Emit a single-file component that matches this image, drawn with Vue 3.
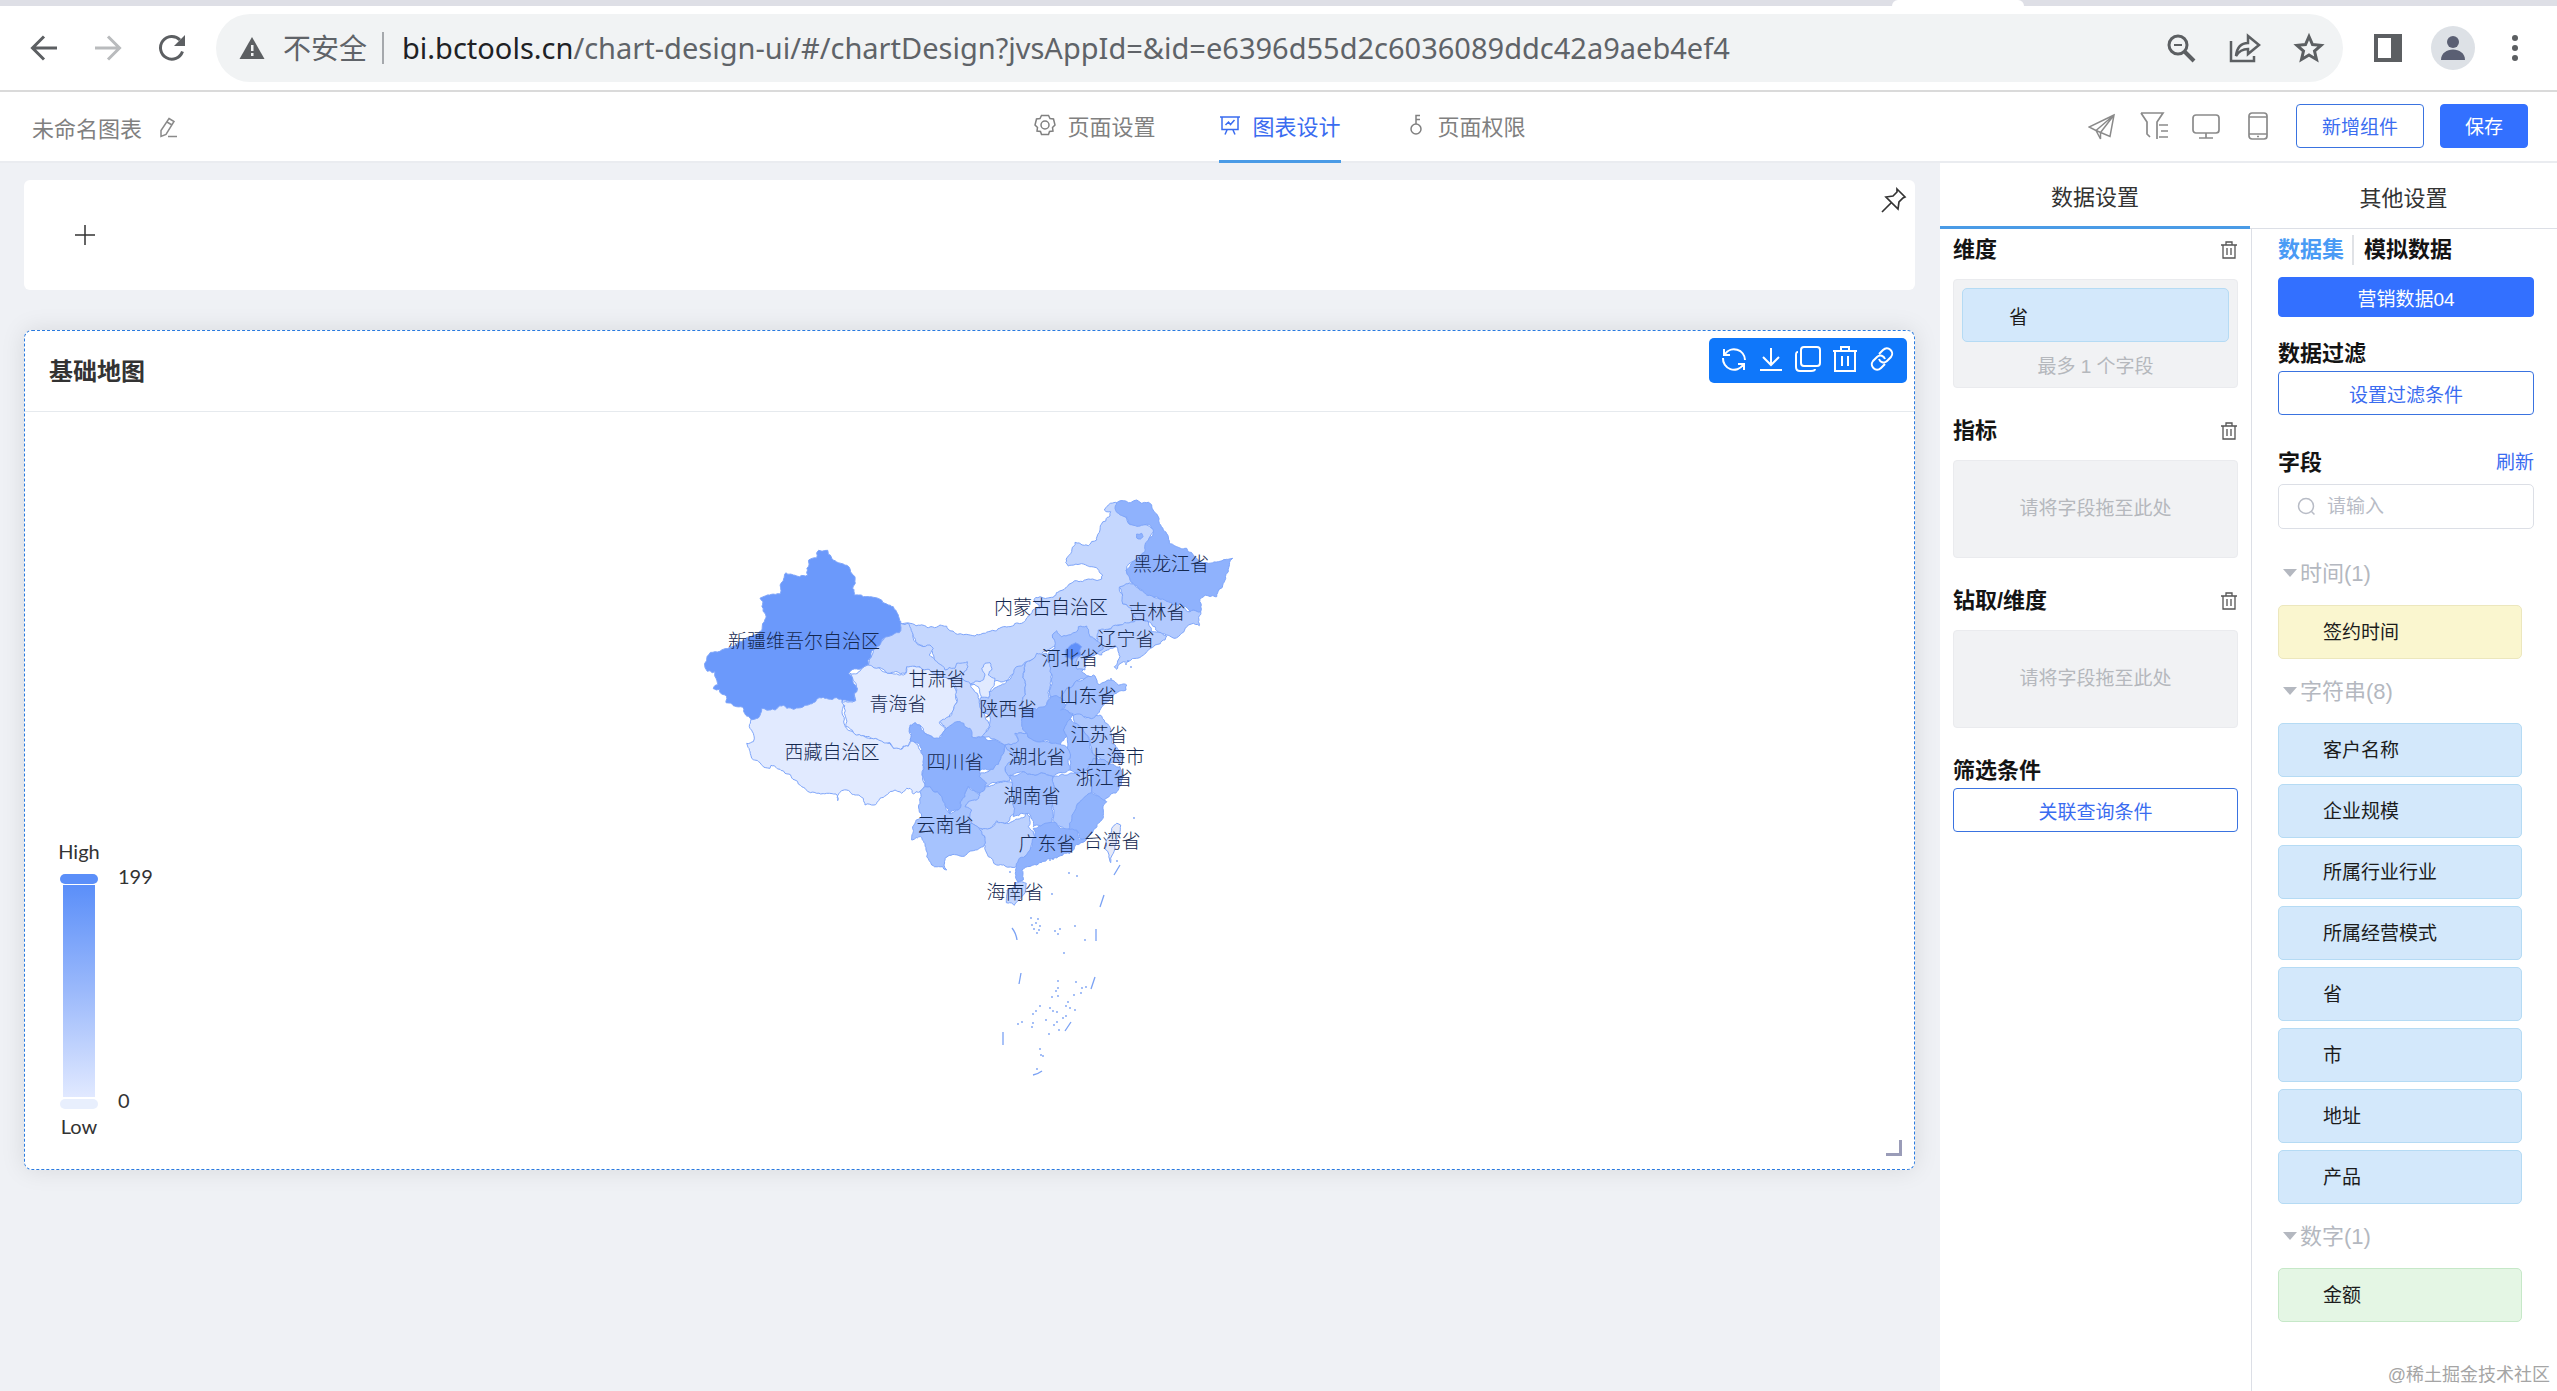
<script setup>
import { ref } from 'vue'

const keyword = ref('')

const groups = [
  { name: '时间', kind: 'time', fields: ['签约时间'] },
  { name: '字符串', kind: 'text', fields: ['客户名称', '企业规模', '所属行业行业', '所属经营模式', '省', '市', '地址', '产品'] },
  { name: '数字', kind: 'number', fields: ['金额'] },
]

// Province outlines: [name, fill, origin x, origin y, points at three units per pixel]
const provinces = [
  ['内蒙古', '#c5d7fe', 960, 480, '-178,430 -150,430 -120,436 -60,435 -30,452 10,464 45,468 90,454 150,440 185,430 205,408 240,385 222,358 240,350 280,352 315,325 350,302 385,297 425,297 428,285 405,262 370,252 325,258 317,248 335,215 345,187 385,197 410,180 420,150 450,108 452,95 433,90 445,75 470,68 490,100 505,130 560,135 585,145 570,175 560,215 500,260 515,300 520,315 478,322 490,350 490,372 520,385 530,415 480,435 440,450 415,475 400,480 380,475 300,470 285,500 250,515 205,545 150,590 130,605 100,605 90,620 60,615 35,615 5,605 -20,580 -60,570 -80,540 -90,500 -120,495 -140,470'],
  ['西藏', '#e1eaff', 690, 480, '160,684 250,670 370,640 455,650 458,685 463,720 470,745 500,762 545,775 585,785 600,790 610,805 635,808 640,798 655,798 660,785 672,784 684,795 694,820 700,860 698,900 706,915 700,925 690,935 678,935 670,942 660,925 650,925 635,940 615,930 590,945 570,955 560,970 545,975 525,975 520,955 500,945 480,935 455,932 447,940 443,962 438,942 410,940 380,940 362,938 345,925 325,912 315,900 285,880 258,862 243,856 240,865 210,848 185,835 177,805 170,790 190,785 190,760 178,740 183,719'],
  ['青海', '#e3ebff', 690, 480, '533,555 560,562 580,575 600,580 640,585 650,572 648,560 675,560 690,562 720,570 760,590 790,600 800,640 802,665 792,690 775,720 758,722 748,728 765,755 752,765 750,775 730,775 705,760 690,735 675,728 662,738 662,780 655,798 640,798 632,808 612,805 600,788 545,775 490,757 468,740 463,700 455,665 497,662 492,640 502,626 480,580'],
  ['甘肃', '#c6d7fe', 890, 610, '32,40 55,40 70,85 85,105 120,105 130,115 118,135 145,160 165,180 195,175 200,160 232,155 230,180 215,205 240,220 262,250 268,270 275,300 285,320 300,345 288,375 275,382 245,380 225,355 205,340 190,345 180,365 165,350 150,335 155,330 180,320 190,300 202,270 198,235 185,210 120,180 90,170 50,170 45,190 0,190 -40,175 -65,165 -50,120 0,75'],
  ['新疆', '#6b99fb', 690, 480, '386,211 413,211 415,223 430,240 445,248 460,252 478,262 485,280 495,290 496,310 488,325 492,345 520,350 550,352 570,358 590,372 610,380 622,400 632,430 628,458 600,468 575,480 548,510 540,535 533,555 505,568 476,580 488,595 490,610 502,626 492,640 497,660 470,662 440,653 410,655 380,658 370,668 345,676 325,684 310,688 290,685 280,676 262,684 255,690 238,690 215,686 212,700 205,714 185,719 170,708 160,684 140,680 108,668 106,645 92,640 88,628 70,626 72,620 84,614 78,595 75,575 52,574 44,550 52,528 75,515 105,506 125,500 150,485 180,470 215,452 217,438 228,412 220,395 219,365 210,355 245,343 270,342 273,310 288,278 310,285 353,285 356,240 380,234'],
  ['宁夏', '#e1eaff', 890, 610, '285,160 300,158 305,180 295,195 315,205 310,230 298,245 295,265 275,265 265,230 242,222 270,215 285,195 275,175'],
  ['黑龙江', '#8fb2fd', 960, 480, '470,68 490,62 530,60 545,70 575,75 595,110 610,150 628,190 650,200 680,205 700,225 715,240 745,250 775,245 800,238 818,235 805,275 795,300 770,350 735,345 720,358 722,395 690,395 670,378 640,375 610,365 590,350 560,345 535,325 520,310 510,300 498,270 520,245 555,215 565,180 580,150 570,135 540,138 508,132 500,110 475,100 465,85'],
  ['加格达奇', '#8fb2fd', 960, 480, '530,162 545,160 549,170 542,177 530,174'],
  ['吉林', '#b2cafe', 960, 480, '478,322 520,312 540,330 560,345 600,358 640,375 690,395 722,395 718,437 700,430 680,440 665,460 645,475 620,465 600,462 585,440 560,420 530,420 515,385 488,372 488,345'],
  ['辽宁', '#b9cffe', 960, 480, '415,450 440,448 480,435 530,420 565,425 575,455 620,468 615,480 585,495 560,515 530,535 490,545 470,568 463,560 480,530 470,500 450,505 425,525 408,520 400,495 415,480'],
  ['陕西', '#b2cafe', 890, 610, '412,155 400,190 405,240 398,300 395,330 410,370 375,370 385,395 345,405 320,390 275,380 300,350 300,320 275,300 270,265 295,265 298,245 312,235 350,212 375,175'],
  ['山西', '#b8cefe', 890, 610, '410,155 440,130 470,130 480,170 485,190 480,230 478,265 465,295 440,300 398,300 405,240 400,190'],
  ['河北', '#a3c0fe', 890, 610, '487,75 500,62 515,80 535,75 560,65 565,50 590,48 600,80 625,95 640,115 620,130 600,140 585,150 580,178 575,185 600,200 560,212 530,235 518,262 480,258 485,225 480,185 470,145 478,125 495,115'],
  ['天津', '#bdd2fe', 890, 610, '575,135 588,150 585,180 562,178 560,150'],
  ['北京', '#6090fa', 890, 610, '555,98 575,110 572,135 545,150 525,140 528,118'],
  ['山东', '#a3c0fe', 890, 610, '560,212 585,205 610,195 628,225 655,210 685,225 710,225 708,240 670,255 645,280 625,310 600,325 560,318 545,310 515,300 530,280 510,265 530,235'],
  ['江苏', '#adc7fe', 890, 610, '550,315 600,325 630,315 655,345 665,400 700,440 690,460 650,455 620,440 600,400 585,370 555,340'],
  ['安徽', '#9dbcfe', 890, 610, '530,325 560,340 585,370 600,410 620,440 600,480 560,488 540,480 540,440 530,380 520,360'],
  ['河南', '#8db1fd', 890, 610, '480,260 515,265 528,285 512,300 550,315 530,340 520,360 530,380 510,405 480,395 440,395 410,370 395,340 395,305 440,300 465,290'],
  ['湖北', '#a3c0fe', 890, 610, '375,370 410,370 440,395 490,400 515,405 540,430 540,480 490,500 460,490 400,485 350,495 345,470 380,450 370,430 345,405 385,393'],
  ['重庆', '#b3cbfe', 890, 610, '345,405 370,430 375,450 345,475 360,510 330,515 285,530 265,490 300,480 330,450'],
  ['四川', '#8db1fd', 890, 610, '60,345 75,338 100,365 135,385 155,378 165,360 200,335 240,355 245,380 280,380 320,392 345,408 330,450 310,478 270,480 268,500 290,520 280,555 255,545 235,530 225,560 205,600 180,610 150,555 120,530 105,530 100,450 85,400 60,390'],
  ['贵州', '#bcd1fe', 890, 610, '250,570 285,530 340,515 370,520 365,560 375,610 345,640 320,632 300,655 270,655 245,640 225,590 230,570'],
  ['湖南', '#a0befe', 890, 610, '360,495 400,485 460,490 490,500 485,560 490,620 480,650 440,645 430,650 415,610 370,620 370,560 365,510'],
  ['江西', '#adc7fe', 890, 610, '490,500 550,490 590,490 605,545 565,580 545,640 535,660 500,650 488,630 485,560'],
  ['浙江', '#9cbbfe', 890, 610, '590,480 610,445 650,455 690,470 700,500 685,540 640,572 605,545'],
  ['福建', '#91b4fd', 890, 610, '605,548 640,570 650,575 640,600 635,630 610,662 580,695 565,665 535,660 550,610 570,575'],
  ['广西', '#bcd1fe', 890, 610, '270,660 300,655 320,635 350,640 410,610 420,620 415,650 435,680 425,720 375,772 320,765 295,740 280,700 285,680 265,670'],
  ['广东', '#8fb2fd', 890, 610, '430,655 465,640 500,640 510,655 560,660 568,690 590,688 540,730 490,745 440,765 395,780 400,810 382,815 376,790 378,775 420,720 435,680'],
  ['云南', '#a6c3fe', 890, 610, '90,545 105,530 120,530 150,555 180,612 205,600 225,560 235,530 270,555 235,575 225,590 245,600 240,640 270,660 285,685 280,710 250,722 210,738 165,745 170,780 158,770 125,765 110,740 108,720 92,680 65,690 68,650 95,620 90,580'],
  ['海南', '#c3d6fe', 890, 610, '351,840 375,818 409,820 407,840 386,870 373,886 349,878'],
  ['台湾', '#e6e9f6', 890, 610, '680,640 692,645 690,665 672,725 662,758 645,715 650,690 665,655'],
]

// Repeatable pseudo-random value in -1..1, the same for both provinces on a border
const noise = (x, y, seed) => {
  const v = Math.sin(x * 12.9898 + y * 78.233 + seed) * 43758.5453
  return (v - Math.floor(v)) * 2 - 1
}

// Splits a border edge in two until it is short, nudging each midpoint
const roughen = (a, b) => {
  const length = Math.hypot(b[0] - a[0], b[1] - a[1])
  if (length < 9) return [b]
  const sx = a[0] + b[0]
  const sy = a[1] + b[1]
  const amount = Math.min(length * 0.17, 6)
  const mid = [sx / 2 + noise(sx, sy, 1) * amount, sy / 2 + noise(sx, sy, 2) * amount]
  return [...roughen(a, mid), ...roughen(mid, b)]
}

const shapes = provinces.map(([name, fill, ox, oy, text]) => {
  const points = text.split(' ').map((pair) => {
    const [x, y] = pair.split(',').map(Number)
    return [x + ox * 3, y + oy * 3]
  })
  const line = points.flatMap((p, i) => roughen(p, points[(i + 1) % points.length]))
  return { name, fill, points: line.map(([x, y]) => `${(x / 3).toFixed(1)},${(y / 3).toFixed(1)}`).join(' ') }
})

const labels = [
  ['新疆维吾尔自治区', 804, 641], ['甘肃省', 937, 679], ['青海省', 898, 704], ['西藏自治区', 832, 752],
  ['四川省', 955, 762], ['黑龙江省', 1171, 564], ['内蒙古自治区', 1051, 607], ['吉林省', 1157, 612],
  ['辽宁省', 1126, 639], ['河北省', 1070, 658], ['山东省', 1088, 696], ['陕西省', 1008, 709],
  ['江苏省', 1099, 735], ['湖北省', 1037, 757], ['上海市', 1116, 757], ['浙江省', 1104, 778],
  ['湖南省', 1032, 796], ['云南省', 945, 825], ['广东省', 1047, 844], ['台湾省', 1112, 841], ['海南省', 1015, 892],
]

const seaLines = 'M1120 865l-6 10M1104 895l-4 12M1096 929v12M1095 977l-4 12M1071 1022l-6 9M1042 1071q-4 3-9 4M1003 1032v13M1021 973l-2 11M1012 928q4 5 5 12'

const islets = [
  [1031, 918], [1038, 919], [1032, 925], [1036, 923], [1040, 926], [1034, 929], [1039, 930], [1037, 933], [1055, 931], [1060, 929],
  [1058, 934], [1052, 894], [1075, 926], [1085, 940], [1064, 953], [1069, 873], [1077, 876], [1058, 981], [1058, 988], [1056, 991],
  [1076, 982], [1082, 988], [1086, 987], [1081, 993], [1074, 995], [1052, 997], [1058, 996], [1068, 1002], [1066, 1006], [1070, 1008],
  [1075, 1010], [1050, 1008], [1053, 1011], [1057, 1012], [1040, 1006], [1036, 1011], [1033, 1014], [1046, 1020], [1054, 1025], [1057, 1022],
  [1033, 1023], [1032, 1027], [1022, 1022], [1018, 1024], [1063, 1018], [1066, 1016], [1059, 1030], [1049, 1034], [1040, 1049], [1041, 1055],
  [1043, 1056], [1037, 1069], [1126, 664], [1128, 661], [1131, 667], [1111, 679], [1010, 872], [1050, 860], [1053, 859], [1134, 818], [1117, 861],
]
</script>

<template>
  <div class="window">
    <div class="tabstrip"><span class="tabfoot"></span></div>

    <div class="browser">
      <button class="plain" aria-label="后退"><svg width="28" height="28" viewBox="0 0 28 28" fill="none" stroke="#5c5f62" stroke-width="3"><path d="M27 14H3M14 2.500 2.500 14 14 25.500" /></svg></button>
      <button class="plain" aria-label="前进"><svg width="28" height="28" viewBox="0 0 28 28" fill="none" stroke="#b9bbbd" stroke-width="3"><path d="M1 14h24M14 2.500 25.500 14 14 25.500" /></svg></button>
      <button class="plain" aria-label="刷新"><svg width="28" height="28" viewBox="0 0 28 28"><path d="M24.500 17.500A11.300 11.300 0 1 1 22 6" fill="none" stroke="#5c5f62" stroke-width="3" /><path d="M27 1v11H16z" fill="#5c5f62" /></svg></button>
      <div class="address">
        <svg width="26" height="24" viewBox="0 0 26 24"><path d="M13 1 25.500 23H.5z" fill="#5c5f62" /><path d="M12 9h2.500v6H12zM12 17h2.500v3H12z" fill="#f1f3f4" /></svg>
        <span class="unsafe">不安全</span>
        <span class="url"><b>bi.bctools.cn</b>/chart-design-ui/#/chartDesign?jvsAppId=&amp;id=e6396d55d2c6036089ddc42a9aeb4ef4</span>
        <span class="address-tools">
          <button class="plain" aria-label="缩放"><svg width="32" height="32" viewBox="0 0 32 32" fill="none" stroke="#5c5f62" stroke-width="3"><circle cx="13" cy="13" r="9" /><path d="M20 20l9 9" stroke-width="4" /><path d="M9 13h8" stroke-width="2" /></svg></button>
          <button class="plain" aria-label="分享"><svg width="32" height="32" viewBox="0 0 32 32" fill="none" stroke="#5c5f62" stroke-width="2.500"><path d="M2 9v20h23v-5" /><path d="M7 24c1-9 5-13 12-13V4l11 9-11 9v-5c-6 0-9 2-12 7z" /></svg></button>
          <button class="plain" aria-label="收藏"><svg width="32" height="32" viewBox="0 0 32 32" fill="none" stroke="#5c5f62" stroke-width="3"><path d="M16 4.500l3.500 8 8.500.8-6.500 5.700 2 8.500L16 23l-7.500 4.500 2-8.500L4 13.300l8.500-.8z" /></svg></button>
        </span>
      </div>
      <button class="plain" aria-label="侧边栏"><svg width="30" height="28" viewBox="0 0 30 28"><path d="M1 0h28v28H1zM5 4v20h13V4z" fill="#5c5f62" fill-rule="evenodd" /></svg></button>
      <button class="plain" aria-label="用户"><svg width="44" height="44" viewBox="0 0 44 44"><circle cx="22" cy="22" r="22" fill="#dde1e6" /><circle cx="22" cy="16" r="6" fill="#5a5f73" /><path d="M10 34c0-14 24-14 24 0z" fill="#5a5f73" /></svg></button>
      <button class="plain more" aria-label="更多"><svg width="8" height="28" viewBox="0 0 8 28" fill="#5c5f62"><circle cx="4" cy="4" r="3" /><circle cx="4" cy="14" r="3" /><circle cx="4" cy="24" r="3" /></svg></button>
    </div>

    <header class="header">
      <div class="doc">
        <span>未命名图表</span>
        <svg width="20" height="22" viewBox="0 0 20 22" fill="none" stroke="#8a8a8a" stroke-width="1.500"><path d="M11 2.500l5 3-8 13-5 2V14.500zM9 6l5 3M10 20.500h9" /></svg>
      </div>
      <nav class="nav">
        <button>
          <svg width="22" height="22" viewBox="0 0 22 22" fill="none" stroke="currentColor" stroke-width="1.500"><path d="M7.500 1.500h7l1.500 3 3.500.5L21 11l-2.500 2.500.5 3.500-3.500.5-1 3h-7l-1-3-3.500-.5.5-3.500L1 11l1.500-6 3.500-.5z" /><circle cx="11" cy="11" r="4" /></svg>
          页面设置
        </button>
        <button class="on">
          <svg width="22" height="22" viewBox="0 0 22 22" fill="none" stroke="currentColor" stroke-width="1.500"><path d="M1 3h20M3 3v12.500h16V3M8 16l-2 4.500M14 16l2 4.500M6.500 11l3-3 2 2.500 4-4.500" /></svg>
          图表设计
        </button>
        <button>
          <svg width="22" height="22" viewBox="0 0 22 22" fill="none" stroke="currentColor" stroke-width="1.500"><circle cx="11" cy="15" r="5" /><path d="M11 10V1.500h4M11 5.500h4" /></svg>
          页面权限
        </button>
      </nav>
      <div class="actions">
        <button class="plain" aria-label="发布"><svg width="28" height="28" viewBox="0 0 28 28" fill="none" stroke="#8a8a8a" stroke-width="1.500"><path d="M26 3 1 15l7 3.500 14 6zM26 3 8 18.500M26 3 12.500 20.500V27L8 18.500" /></svg></button>
        <button class="plain" aria-label="筛选"><svg width="28" height="28" viewBox="0 0 28 28" fill="none" stroke="#8a8a8a" stroke-width="1.700"><path d="M1 1h22l-6 9v17M1 1l6 9v12l3 3M19 13h9M21 19h7M19 25h9" /></svg></button>
        <button class="plain" aria-label="电脑"><svg width="28" height="28" viewBox="0 0 28 28" fill="none" stroke="#8a8a8a" stroke-width="1.700"><rect x="1" y="3" width="26" height="18" rx="3" /><path d="M14 21v5M7 26h14" /></svg></button>
        <button class="plain" aria-label="手机"><svg width="28" height="28" viewBox="0 0 28 28" fill="none" stroke="#8a8a8a" stroke-width="1.700"><rect x="5" y="1" width="18" height="26" rx="3" /><path d="M5 5h18M5 22h18M13 24.500h2" /></svg></button>
        <button class="btn add">新增组件</button>
        <button class="btn fill save">保存</button>
      </div>
    </header>

    <div class="work">
      <main class="canvas">
        <section class="query">
          <button class="plain" aria-label="添加"><svg width="22" height="22" viewBox="0 0 22 22" stroke="#333" stroke-width="1.500"><path d="M11 1v20M1 11h20" /></svg></button>
          <button class="plain pin" aria-label="固定"><svg width="26" height="26" viewBox="0 0 26 26" fill="none" stroke="#333" stroke-width="1.700"><path d="M16 2l8 8-2 1-4 4-1 7L5 10l7-1 4-4zM10 16l-9 9" /></svg></button>
        </section>

        <section class="chart">
          <div class="chart-head"><h2>基础地图</h2></div>
          <div class="toolbar">
            <button class="plain" aria-label="刷新"><svg width="26" height="26" viewBox="0 0 26 26" fill="none" stroke="#fff" stroke-width="2"><path d="M4 8a11 11 0 0 1 20 6M22 19A11 11 0 0 1 2 12M3 3v6h6M23 24v-6h-6" /></svg></button>
            <button class="plain" aria-label="下载"><svg width="26" height="26" viewBox="0 0 26 26" fill="none" stroke="#fff" stroke-width="2"><path d="M13 2v17M5 11l8 8 8-8M2 24h22" /></svg></button>
            <button class="plain" aria-label="复制"><svg width="26" height="26" viewBox="0 0 26 26" fill="none" stroke="#fff" stroke-width="2"><rect x="6" y="1" width="19" height="19" rx="3" /><path d="M3 6c-2 0-2 1-2 3v12c0 3 1 4 4 4h11c2 0 4 0 4-2" /></svg></button>
            <button class="plain" aria-label="删除"><svg width="26" height="26" viewBox="0 0 26 26" fill="none" stroke="#fff" stroke-width="2"><path d="M1 5h24M3 5v20h20V5M9 5V1h8v4M10 10v10M16 10v10" /></svg></button>
            <button class="plain" aria-label="链接"><svg width="26" height="26" viewBox="0 0 26 26" fill="none" stroke="#fff" stroke-width="2"><path d="M10 8l4-4c5-5 12 2 8 7l-4 4c-3 3-7 1-8-2M16 18l-4 4c-5 5-12-2-8-7l4-4c3-3 7-1 8 2" /></svg></button>
          </div>
          <svg class="map" viewBox="25 412 1889 757">
            <defs>
              <linearGradient id="scale" x1="0" y1="0" x2="0" y2="1">
                <stop offset="0" stop-color="#5b8ff9" />
                <stop offset="0.500" stop-color="#9bb9fb" />
                <stop offset="1" stop-color="#e1e9ff" />
              </linearGradient>
            </defs>
            <g class="land">
              <polygon v-for="s in shapes" :key="s.name" :points="s.points" :fill="s.fill" />
            </g>
            <path class="sea" :d="seaLines" />
            <circle v-for="(p, i) in islets" :key="i" :cx="p[0]" :cy="p[1]" r="0.900" fill="#7ba2f4" />
            <g class="names">
              <text v-for="l in labels" :key="l[0]" :x="l[1]" :y="l[2] + 7">{{ l[0] }}</text>
            </g>
            <g class="legend">
              <rect x="60" y="874" width="38" height="10" rx="5" fill="#5b8ff9" />
              <rect x="63" y="885" width="32" height="212" fill="url(#scale)" />
              <rect x="60" y="1099" width="38" height="10" rx="5" fill="#e8effd" />
              <text x="79" y="859" text-anchor="middle">High</text>
              <text x="118" y="884">199</text>
              <text x="118" y="1108">0</text>
              <text x="79" y="1134" text-anchor="middle">Low</text>
            </g>
          </svg>
          <span class="grip"></span>
        </section>
      </main>

      <aside class="side">
        <div class="side-tabs">
          <button class="on">数据设置</button>
          <button>其他设置</button>
        </div>
        <div class="side-body">
          <div class="config">
            <section>
              <h3>维度 <button class="plain" aria-label="清空维度"><svg width="18" height="18" viewBox="0 0 18 18" fill="none" stroke="#555" stroke-width="1.300"><path d="M1 4h16M3 4v13h12V4M6 4V1h6v3M7 7v7M11 7v7" /></svg></button></h3>
              <div class="drop filled">
                <div class="field text">省</div>
                <p>最多 1 个字段</p>
              </div>
            </section>
            <section v-for="name in ['指标', '钻取/维度']" :key="name">
              <h3>{{ name }} <button class="plain" :aria-label="'清空' + name"><svg width="18" height="18" viewBox="0 0 18 18" fill="none" stroke="#555" stroke-width="1.300"><path d="M1 4h16M3 4v13h12V4M6 4V1h6v3M7 7v7M11 7v7" /></svg></button></h3>
              <div class="drop">请将字段拖至此处</div>
            </section>
            <section>
              <h3 class="tight">筛选条件</h3>
              <button class="btn wide">关联查询条件</button>
            </section>
          </div>

          <div class="data">
            <div class="source">
              <button class="on">数据集</button>
              <button>模拟数据</button>
            </div>
            <button class="btn fill wide dataset">营销数据04</button>
            <h3 class="tight">数据过滤</h3>
            <button class="btn wide">设置过滤条件</button>
            <h3 class="fields-title">字段 <a href="#">刷新</a></h3>
            <label class="search">
              <svg width="20" height="20" viewBox="0 0 20 20" fill="none" stroke="#b8bcc6" stroke-width="1.500"><circle cx="9" cy="9" r="7.500" /><path d="M14.500 14.500l3 3" /></svg>
              <input v-model="keyword" type="text" placeholder="请输入" aria-label="搜索字段" />
            </label>
            <div v-for="g in groups" :key="g.name">
              <button class="group">{{ g.name }}({{ g.fields.length }})</button>
              <ul>
                <li v-for="f in g.fields" :key="f" class="field" :class="g.kind">{{ f }}</li>
              </ul>
            </div>
          </div>
        </div>
        <span class="watermark">@稀土掘金技术社区</span>
      </aside>
    </div>
  </div>
</template>

<style>
body {
  margin: 0;
  background: #eff1f5;
}
</style>

<style scoped>
* {
  box-sizing: border-box;
}

.window {
  display: flex;
  flex-direction: column;
  min-height: 100vh;
  font-family: "Liberation Sans", "Noto Sans CJK SC", sans-serif;
  font-size: 19px;
  color: #1c1c1c;
}

button {
  padding: 0;
  border: 0;
  background: none;
  font: inherit;
  color: inherit;
}

svg {
  display: block;
  flex: none;
}

h2,
h3,
p,
ul {
  margin: 0;
  padding: 0;
  list-style: none;
}

.tabstrip {
  height: 6px;
  padding-left: 74%;
  background: #dedfe6;
}

.tabfoot {
  display: block;
  width: 132px;
  height: 6px;
  background: #fff;
  border-radius: 6px 6px 0 0;
}

.browser {
  display: flex;
  align-items: center;
  gap: 28px;
  height: 86px;
  padding: 0 38px 0 30px;
  background: #fff;
  border-bottom: 2px solid #dadada;
}

.browser > button:nth-child(-n + 2) {
  margin-right: 8px;
}

.browser .more {
  margin-left: 8px;
}

.address {
  display: flex;
  flex: 1;
  align-items: center;
  height: 68px;
  margin: 0 2px;
  padding: 0 18px 0 23px;
  border-radius: 34px;
  background: #f1f3f4;
  font-family: "Noto Sans", "Noto Sans CJK SC", sans-serif;
  font-size: 28px;
  line-height: 32px;
  color: #5f6368;
}

.unsafe {
  margin-left: 18px;
  padding-right: 15px;
  border-right: 2px solid #a5a8ac;
}

.url {
  margin-left: 18px;
  font-size: 29px;
  white-space: nowrap;
}

.url b {
  font-weight: 400;
  color: #202124;
}

.address-tools {
  display: flex;
  gap: 32px;
  margin-left: auto;
}

.header {
  display: grid;
  grid-template-columns: 1fr auto 1fr;
  align-items: center;
  height: 71px;
  padding: 0 29px 0 32px;
  background: #fff;
  border-bottom: 2px solid #eaecf0;
  color: #808080;
}

.doc {
  display: flex;
  align-items: center;
  gap: 16px;
  padding-bottom: 2px;
  font-size: 22px;
}

.nav {
  display: flex;
  gap: 64px;
  height: 71px;
  font-size: 22px;
}

.nav button {
  display: flex;
  align-items: center;
  gap: 11px;
  padding-bottom: 3px;
  border-bottom: 3px solid transparent;
}

.nav .on {
  color: #3a6cf0;
  border-color: #4a9be6;
}

.actions {
  display: flex;
  align-items: center;
  justify-content: flex-end;
  gap: 24px;
  padding-bottom: 4px;
}

.btn {
  height: 44px;
  border: 1px solid #3a73e0;
  border-radius: 4px;
  background: #fff;
  font-size: 19px;
  color: #3a6cf0;
}

.btn.fill {
  border-color: #3370ff;
  background: #3370ff;
  color: #fff;
}

.btn.wide {
  display: block;
  width: 100%;
}

.btn.add {
  width: 128px;
}

.btn.save {
  width: 88px;
  margin-left: -8px;
}

.work {
  display: flex;
  flex: 1;
}

.canvas {
  flex: 1;
  min-width: 0;
  padding: 17px 25px 0 24px;
  background: #eff1f5;
}

.query {
  position: relative;
  display: flex;
  align-items: center;
  height: 110px;
  padding-left: 50px;
  border-radius: 6px;
  background: #fff;
}

.pin {
  position: absolute;
  top: 7px;
  right: 8px;
}

.chart {
  position: relative;
  margin-top: 40px;
  border: 1px dashed #2a7be0;
  border-radius: 8px;
  background: #fff;
  box-shadow: 0 0 24px rgba(0, 0, 0, 0.1);
}

.chart-head {
  height: 81px;
  padding: 0 24px;
  border-bottom: 1px solid #e6eaee;
}

.chart-head h2 {
  font-size: 24px;
  line-height: 82px;
  color: #333;
}

.toolbar {
  position: absolute;
  top: 7px;
  right: 7px;
  display: flex;
  align-items: center;
  gap: 11px;
  height: 45px;
  padding: 0 12px 3px;
  border-radius: 5px;
  background: #0f77fa;
}

.map {
  width: 100%;
  height: auto;
}

.land polygon {
  stroke: #7ea5fa;
  stroke-width: 1;
  stroke-linejoin: round;
}

.sea {
  fill: none;
  stroke: #7ba2f4;
  stroke-width: 1.300;
}

.names text {
  font-size: 19px;
  font-weight: 300;
  text-anchor: middle;
  fill: #14284f;
}

.legend text {
  font-family: Lato, sans-serif;
  font-size: 20px;
  fill: #333;
}

.grip {
  position: absolute;
  right: 12px;
  bottom: 13px;
  width: 16px;
  height: 16px;
  border-right: 3px solid #9a9cb8;
  border-bottom: 3px solid #9a9cb8;
}

.side {
  position: relative;
  display: flex;
  flex-direction: column;
  width: 617px;
  background: #fff;
}

.side-tabs {
  display: flex;
  height: 66px;
  font-size: 22px;
  color: #333;
}

.side-tabs button {
  flex: 1;
  border-bottom: 1px solid #dcdfe6;
}

.side-tabs .on {
  flex: 0 0 310px;
  border-bottom: 3px solid #4a9be6;
}

.side-body {
  display: flex;
  flex: 1;
}

.config {
  display: flex;
  flex-direction: column;
  gap: 26px;
  width: 312px;
  padding: 4px 13px 0 13px;
  border-right: 1px solid #dcdfe6;
}

h3 {
  display: flex;
  align-items: center;
  justify-content: space-between;
  margin-bottom: 12px;
  font-size: 22px;
  line-height: 34px;
  color: #141414;
}

h3.tight {
  margin-bottom: 0;
}

.drop {
  height: 98px;
  border: 1px solid #eaebee;
  border-radius: 4px;
  background: #f1f2f4;
  text-align: center;
  line-height: 96px;
  color: #b5b8bd;
}

.drop.filled {
  height: 109px;
  padding: 8px;
  line-height: 50px;
}

.field {
  height: 54px;
  padding-left: 44px;
  border: 1px solid #b5dbf4;
  border-radius: 5px;
  background: #d3e8fb;
  text-align: left;
  line-height: 54px;
  color: #1c1c1c;
}

.drop .field {
  padding-left: 46px;
  line-height: 57px;
}

.field + .field {
  margin-top: 7px;
}

.field.time {
  border-color: #ece7bd;
  background: #faf6cf;
}

.field.number {
  border-color: #c6e8c8;
  background: #e4f6e4;
}

.data {
  flex: 1;
  padding: 6px 23px 0 26px;
}

.source {
  display: flex;
  margin-bottom: 12px;
  font-size: 22px;
  font-weight: 700;
  line-height: 30px;
  color: #141414;
}

.source .on {
  margin-right: 10px;
  padding-right: 8px;
  border-right: 2px solid #e0e2e6;
  color: #4a9bf5;
}

.dataset {
  height: 40px;
  margin-bottom: 20px;
}

.fields-title {
  margin: 31px 0 4px;
}

.fields-title a {
  font-size: 19px;
  font-weight: 400;
  text-decoration: none;
  color: #3a6cf0;
}

.search {
  display: flex;
  align-items: center;
  gap: 10px;
  height: 45px;
  margin-bottom: 12px;
  padding: 0 18px;
  border: 1px solid #dcdfe6;
  border-radius: 5px;
}

.search input {
  width: 100%;
  padding: 0;
  border: 0;
  outline: 0;
  background: none;
  font: inherit;
}

.search input::placeholder {
  color: #b8bcc6;
}

.group {
  display: flex;
  align-items: center;
  gap: 3px;
  height: 64px;
  padding: 0 0 5px 5px;
  font-size: 22px;
  color: #b4b8c0;
}

.group::before {
  content: "";
  margin-top: 5px;
  border: 7px solid transparent;
  border-top: 8px solid #b4b8c0;
  border-bottom: 0;
}

.data ul {
  margin-right: 12px;
}

.watermark {
  position: absolute;
  right: 7px;
  bottom: 4px;
  font-size: 18px;
  line-height: 24px;
  color: #a5a5a5;
}
</style>
